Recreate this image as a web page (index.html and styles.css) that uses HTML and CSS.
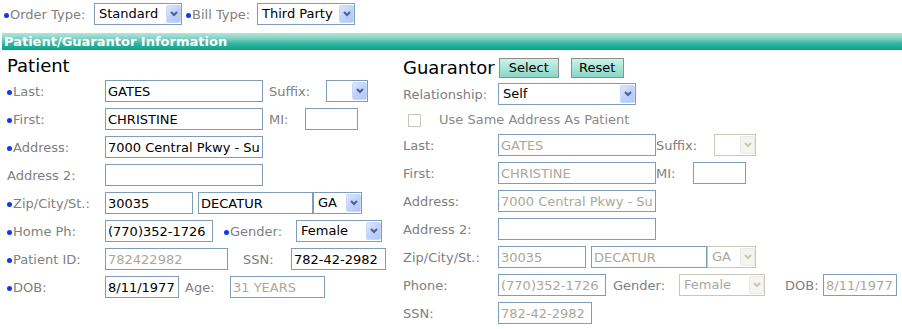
FILE: index.html
```html
<!DOCTYPE html>
<html lang="en">
<head>
    <meta charset="UTF-8">
    <title>Patient/Guarantor Information</title>
    <link rel="stylesheet" href="styles.css">
</head>
<body>
    <div class="topbar">
        <span class="lbl req order-lbl">Order Type:</span>
        <div class="sel sel-order"><span class="sel-val">Standard</span><span class="sel-btn"><svg width="8" height="6" viewBox="0 0 8 6"><polyline points="1,1 4,4 7,1"/></svg></span></div>
        <span class="lbl req bill-lbl">Bill Type:</span>
        <div class="sel sel-bill"><span class="sel-val">Third Party</span><span class="sel-btn"><svg width="8" height="6" viewBox="0 0 8 6"><polyline points="1,1 4,4 7,1"/></svg></span></div>
    </div>

    <div class="section-bar">Patient/Guarantor Information</div>

    <div class="cols">
        <!-- patient side -->
        <div class="col pat">
            <div class="head">Patient</div>
            <div class="row">
                <span class="lbl req key">Last:</span>
                <input class="in in-name" value="GATES">
                <span class="lbl sfx">Suffix:</span>
                <div class="sel sel-sfx"><span class="sel-val"></span><span class="sel-btn"><svg width="8" height="6" viewBox="0 0 8 6"><polyline points="1,1 4,4 7,1"/></svg></span></div>
            </div>
            <div class="row">
                <span class="lbl req key">First:</span>
                <input class="in in-name" value="CHRISTINE">
                <span class="lbl mi">MI:</span>
                <input class="in in-mi" value="">
            </div>
            <div class="row">
                <span class="lbl req key">Address:</span>
                <input class="in in-name" value="7000 Central Pkwy - Suite 500">
            </div>
            <div class="row">
                <span class="lbl key">Address 2:</span>
                <input class="in in-name" value="">
            </div>
            <div class="row">
                <span class="lbl req key">Zip/City/St.:</span>
                <input class="in in-zip" value="30035">
                <input class="in in-city" value="DECATUR">
                <div class="sel sel-st"><span class="sel-val">GA</span><span class="sel-btn"><svg width="8" height="6" viewBox="0 0 8 6"><polyline points="1,1 4,4 7,1"/></svg></span></div>
            </div>
            <div class="row">
                <span class="lbl req key">Home Ph:</span>
                <input class="in in-ph" value="(770)352-1726">
                <span class="lbl req gender">Gender:</span>
                <div class="sel sel-gender"><span class="sel-val">Female</span><span class="sel-btn"><svg width="8" height="6" viewBox="0 0 8 6"><polyline points="1,1 4,4 7,1"/></svg></span></div>
            </div>
            <div class="row">
                <span class="lbl req key">Patient ID:</span>
                <input class="in in-id" value="782422982" disabled>
                <span class="lbl ssn">SSN:</span>
                <input class="in in-ssn" value="782-42-2982">
            </div>
            <div class="row">
                <span class="lbl req key">DOB:</span>
                <input class="in in-dob" value="8/11/1977">
                <span class="lbl age">Age:</span>
                <input class="in in-ssn" value="31 YEARS" disabled>
            </div>
        </div>

        <!-- guarantor side -->
        <div class="col gua">
            <div class="head">
                <span>Guarantor</span>
                <button class="btn btn-select">Select</button>
                <button class="btn btn-reset">Reset</button>
            </div>
            <div class="row">
                <span class="lbl key">Relationship:</span>
                <div class="sel sel-rel"><span class="sel-val">Self</span><span class="sel-btn"><svg width="8" height="6" viewBox="0 0 8 6"><polyline points="1,1 4,4 7,1"/></svg></span></div>
            </div>
            <div class="row chk-row">
                <span class="chk"></span>
                <span class="lbl chk-lbl">Use Same Address As Patient</span>
            </div>
            <div class="row">
                <span class="lbl key">Last:</span>
                <input class="in in-name" value="GATES" disabled>
                <span class="lbl sfx">Suffix:</span>
                <div class="sel sel-sfx off"><span class="sel-val"></span><span class="sel-btn"><svg width="8" height="6" viewBox="0 0 8 6"><polyline points="1,1 4,4 7,1"/></svg></span></div>
            </div>
            <div class="row">
                <span class="lbl key">First:</span>
                <input class="in in-name" value="CHRISTINE" disabled>
                <span class="lbl mi">MI:</span>
                <input class="in in-mi" value="">
            </div>
            <div class="row">
                <span class="lbl key">Address:</span>
                <input class="in in-name" value="7000 Central Pkwy - Suite 500" disabled>
            </div>
            <div class="row">
                <span class="lbl key">Address 2:</span>
                <input class="in in-name" value="">
            </div>
            <div class="row">
                <span class="lbl key">Zip/City/St.:</span>
                <input class="in in-zip" value="30035" disabled>
                <input class="in in-city" value="DECATUR" disabled>
                <div class="sel sel-st off"><span class="sel-val">GA</span><span class="sel-btn"><svg width="8" height="6" viewBox="0 0 8 6"><polyline points="1,1 4,4 7,1"/></svg></span></div>
            </div>
            <div class="row">
                <span class="lbl key">Phone:</span>
                <input class="in in-ph" value="(770)352-1726" disabled>
                <span class="lbl gender">Gender:</span>
                <div class="sel sel-gender off"><span class="sel-val">Female</span><span class="sel-btn"><svg width="8" height="6" viewBox="0 0 8 6"><polyline points="1,1 4,4 7,1"/></svg></span></div>
                <span class="lbl dob">DOB:</span>
                <input class="in in-dob" value="8/11/1977" disabled>
            </div>
            <div class="row">
                <span class="lbl key">SSN:</span>
                <input class="in in-ssn2" value="782-42-2982" disabled>
            </div>
        </div>
    </div>
</body>
</html>
```

FILE: styles.css
```css
:root {
    --label: #808080;
    --field-border: #7f9db9;
    --disabled: #aca899;
    --disabled-border: #c9c7ba;
}

body {
    margin: 0;
    font-family: "DejaVu Sans", Verdana, sans-serif;
    font-size: 13px;
    color: #000;
    background: #fff;
}

/* top order / bill line */
.topbar {
    display: flex;
    align-items: center;
    height: 22px;
    padding: 3px 0 0 4px;
}

.order-lbl {
    width: 90px;
}

.bill-lbl {
    width: 71px;
    margin-left: 4px;
}

.section-bar {
    margin: 8px 0 0 2px;
    height: 17px;
    line-height: 17px;
    padding-left: 2px;
    color: #fff;
    font-weight: bold;
    background: linear-gradient(to bottom, #b4e4db 0%, #86d3c5 30%, #33b6a0 62%, #00a68c 100%);
}

.cols {
    display: grid;
    grid-template-columns: 403px 1fr;
}

.pat {
    padding-left: 7px;
}

.head {
    height: 30px;
    padding-top: 6px;
    box-sizing: border-box;
    font-size: 18px;
    line-height: 20px;
}

.gua .head {
    display: flex;
    align-items: flex-end;
    height: 28px;
    padding-top: 0;
    margin-bottom: 5px;
}

.row {
    display: flex;
    align-items: center;
    height: 22px;
    margin-bottom: 6px;
}

.lbl {
    color: var(--label);
    white-space: nowrap;
    flex-shrink: 0;
}

.key {
    width: 98px;
}

.gua .key {
    width: 95px;
}

.req::before {
    content: "";
    display: inline-block;
    width: 5px;
    height: 5px;
    border-radius: 50%;
    background: #1238e8;
    margin-right: 1px;
    vertical-align: 1px;
}

/* inputs */
.in {
    font: inherit;
    height: 22px;
    box-sizing: border-box;
    border: 1px solid var(--field-border);
    padding: 0 2px;
    margin: 0;
    color: #000;
    background: #fff;
    flex-shrink: 0;
    outline: none;
}

.in:disabled {
    color: var(--disabled);
    background: #fff;
}

.in-name { width: 158px; }
.in-zip { width: 88px; }
.in-city { width: 115px; margin-left: 5px; }
.in-ph { width: 108px; }
.in-id { width: 123px; }
.in-ssn { width: 95px; }
.in-ssn2 { width: 94px; }
.in-dob { width: 74px; }
.in-mi { width: 53px; }

.gua .in-city { width: 116px; }

/* fake XP selects */
.sel {
    display: flex;
    height: 22px;
    box-sizing: border-box;
    border: 1px solid var(--field-border);
    background: #fff;
    flex-shrink: 0;
}

.sel-val {
    flex: 1;
    padding-left: 4px;
    line-height: 20px;
    overflow: hidden;
    white-space: nowrap;
}

.sel-btn {
    width: 15px;
    margin: 1px 0 1px 0;
    box-sizing: border-box;
    border: 1px solid #c8d7fc;
    border-radius: 2px;
    background: linear-gradient(135deg, #dde7fe 0%, #c0d2fb 50%, #b2c7f7 100%);
    display: flex;
    align-items: center;
    justify-content: center;
}

.sel-btn svg polyline {
    fill: none;
    stroke: #4d6185;
    stroke-width: 2;
}

.sel.off {
    border-color: var(--disabled-border);
}

.sel.off .sel-val {
    color: var(--disabled);
}

.sel.off .sel-btn {
    border-color: #ebe9e1;
    background: #f5f4ef;
}

.sel.off .sel-btn svg polyline {
    stroke: #c9c7ba;
}

.sel-order { width: 88px; }
.sel-bill { width: 98px; }
.sel-sfx { width: 42px; }
.sel-st { width: 49px; }
.sel-gender { width: 86px; }
.sel-rel { width: 138px; }

/* in-row labels */
.sfx { width: 57px; margin-left: 6px; }
.mi { width: 36px; margin-left: 6px; }
.gender { width: 72px; margin-left: 11px; }
.ssn { width: 48px; margin-left: 15px; }
.age { width: 45px; margin-left: 6px; }

.gua .sfx { width: 58px; margin-left: 0; }
.gua .mi { width: 37px; margin-left: 0; }
.gua .gender { width: 66px; margin-left: 7px; }
.dob { width: 38px; margin-left: 20px; }

/* guarantor buttons */
.btn {
    font-family: inherit;
    font-size: 13px;
    color: #000;
    height: 20px;
    padding: 0;
    margin: 0 0 0 4px;
    box-sizing: border-box;
    border: 1px solid #8f8f8f;
    background: linear-gradient(to bottom, #cbf3ea 0%, #a9e5d7 50%, #88d6c4 100%);
    line-height: 18px;
}

.btn-select { width: 60px; }
.btn-reset { width: 53px; margin-left: 12px; }

.chk-row {
    height: 17px;
}

.chk {
    width: 13px;
    height: 13px;
    box-sizing: border-box;
    border: 1px solid var(--disabled-border);
    background: #fff;
    margin: 2px 0 0 5px;
    flex-shrink: 0;
}

.chk-lbl {
    margin-left: 18px;
    color: #8a8a8a;
}
```
